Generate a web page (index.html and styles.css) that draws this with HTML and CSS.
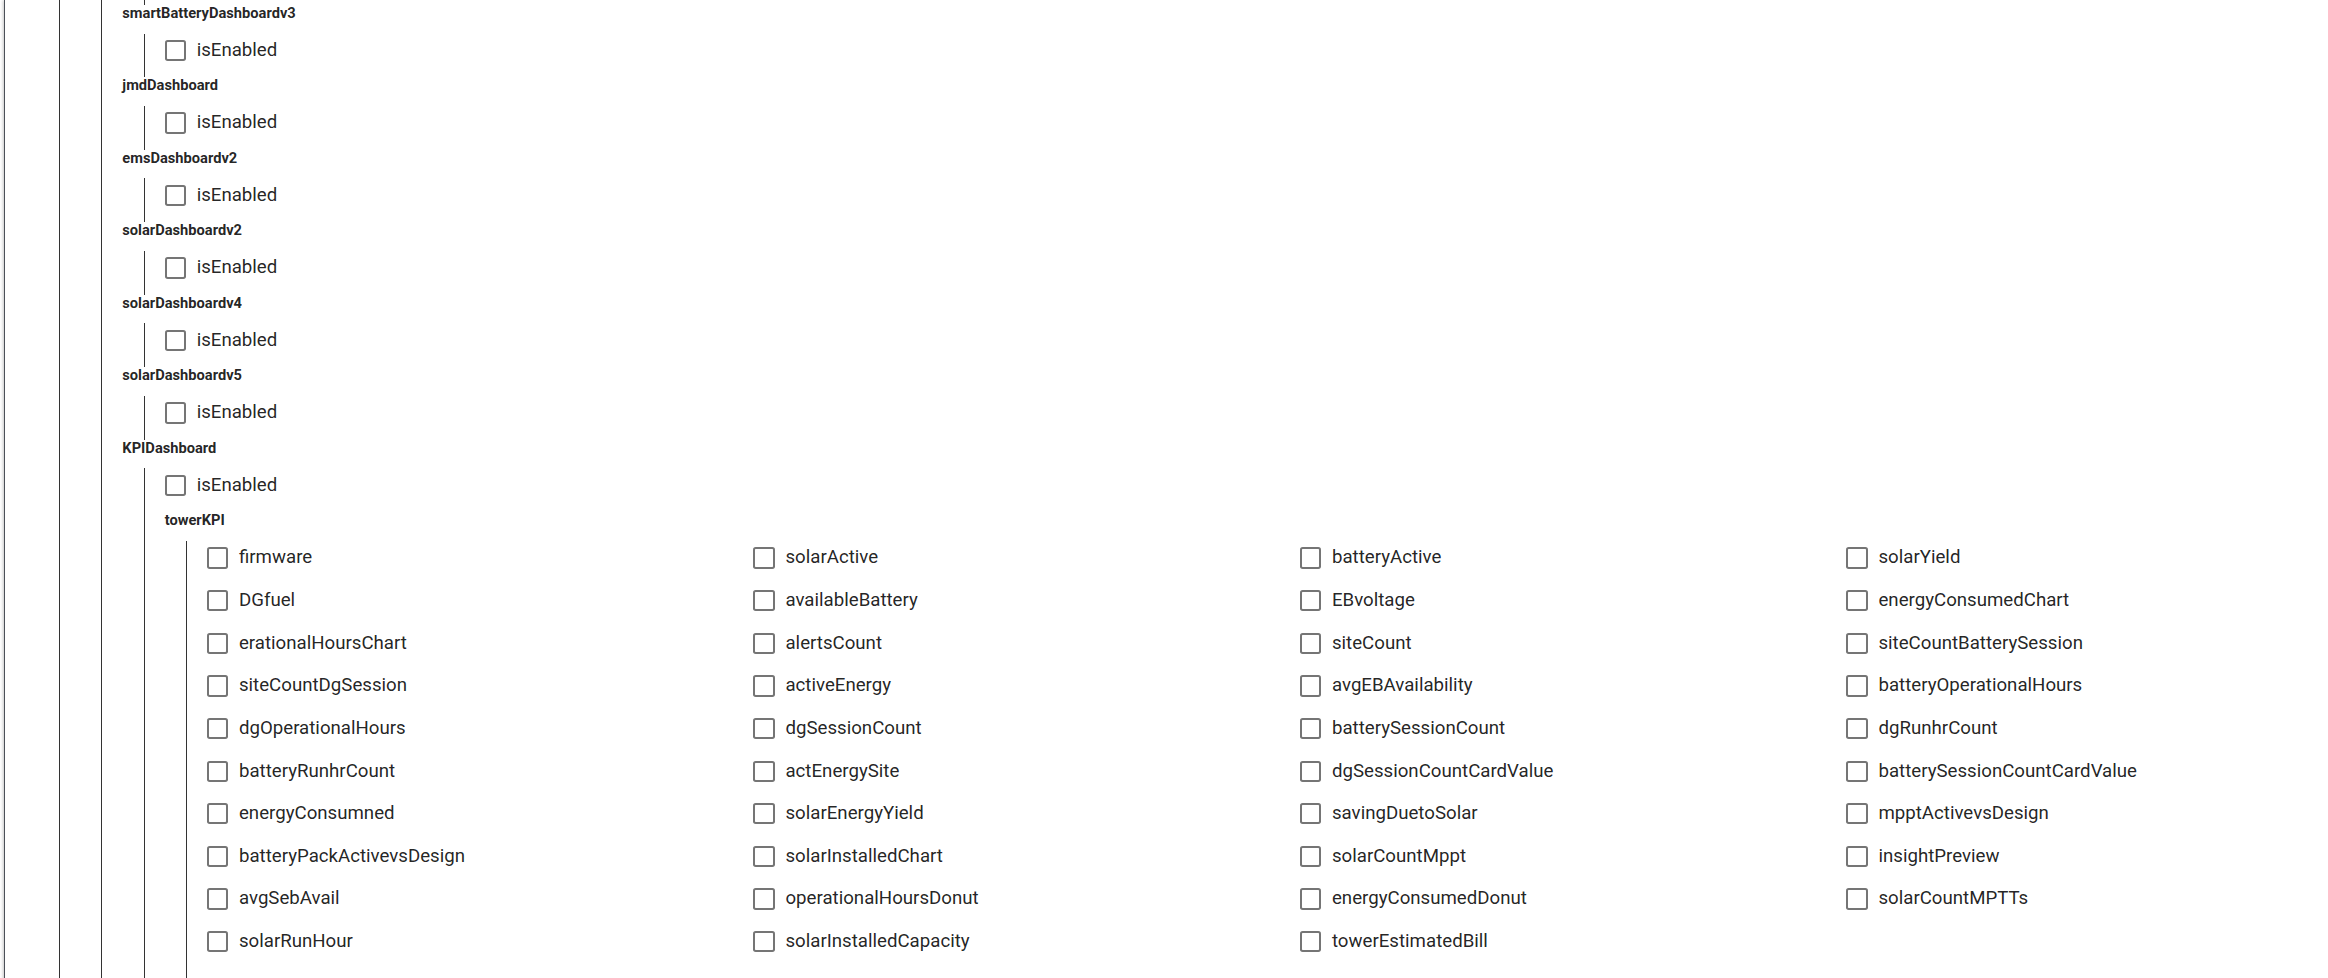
FILE: index.html
```html
<!DOCTYPE html>
<html lang="en">
<head>
<meta charset="utf-8">
<title>Dashboard permissions</title>
<link rel="stylesheet" href="styles.css">
</head>
<body>
<div class="card">
  <div class="children">
    <div class="children">
      <div class="children tail"></div>

      <section class="node">
        <div class="node-title">smartBatteryDashboardv3</div>
        <div class="children single">
          <label class="opt"><input type="checkbox" class="box"><span>isEnabled</span></label>
        </div>
      </section>

      <section class="node">
        <div class="node-title">jmdDashboard</div>
        <div class="children single">
          <label class="opt"><input type="checkbox" class="box"><span>isEnabled</span></label>
        </div>
      </section>

      <section class="node">
        <div class="node-title">emsDashboardv2</div>
        <div class="children single">
          <label class="opt"><input type="checkbox" class="box"><span>isEnabled</span></label>
        </div>
      </section>

      <section class="node">
        <div class="node-title">solarDashboardv2</div>
        <div class="children single">
          <label class="opt"><input type="checkbox" class="box"><span>isEnabled</span></label>
        </div>
      </section>

      <section class="node">
        <div class="node-title">solarDashboardv4</div>
        <div class="children single">
          <label class="opt"><input type="checkbox" class="box"><span>isEnabled</span></label>
        </div>
      </section>

      <section class="node">
        <div class="node-title">solarDashboardv5</div>
        <div class="children single">
          <label class="opt"><input type="checkbox" class="box"><span>isEnabled</span></label>
        </div>
      </section>

      <section class="node">
        <div class="node-title">KPIDashboard</div>
        <div class="children">
          <div class="single">
            <label class="opt"><input type="checkbox" class="box"><span>isEnabled</span></label>
          </div>
          <section class="node">
            <div class="node-title">towerKPI</div>
            <div class="children grid">
              <label class="opt"><input type="checkbox" class="box"><span>firmware</span></label>
              <label class="opt"><input type="checkbox" class="box"><span>solarActive</span></label>
              <label class="opt"><input type="checkbox" class="box"><span>batteryActive</span></label>
              <label class="opt"><input type="checkbox" class="box"><span>solarYield</span></label>

              <label class="opt"><input type="checkbox" class="box"><span>DGfuel</span></label>
              <label class="opt"><input type="checkbox" class="box"><span>availableBattery</span></label>
              <label class="opt"><input type="checkbox" class="box"><span>EBvoltage</span></label>
              <label class="opt"><input type="checkbox" class="box"><span>energyConsumedChart</span></label>

              <label class="opt"><input type="checkbox" class="box"><span>erationalHoursChart</span></label>
              <label class="opt"><input type="checkbox" class="box"><span>alertsCount</span></label>
              <label class="opt"><input type="checkbox" class="box"><span>siteCount</span></label>
              <label class="opt"><input type="checkbox" class="box"><span>siteCountBatterySession</span></label>

              <label class="opt"><input type="checkbox" class="box"><span>siteCountDgSession</span></label>
              <label class="opt"><input type="checkbox" class="box"><span>activeEnergy</span></label>
              <label class="opt"><input type="checkbox" class="box"><span>avgEBAvailability</span></label>
              <label class="opt"><input type="checkbox" class="box"><span>batteryOperationalHours</span></label>

              <label class="opt"><input type="checkbox" class="box"><span>dgOperationalHours</span></label>
              <label class="opt"><input type="checkbox" class="box"><span>dgSessionCount</span></label>
              <label class="opt"><input type="checkbox" class="box"><span>batterySessionCount</span></label>
              <label class="opt"><input type="checkbox" class="box"><span>dgRunhrCount</span></label>

              <label class="opt"><input type="checkbox" class="box"><span>batteryRunhrCount</span></label>
              <label class="opt"><input type="checkbox" class="box"><span>actEnergySite</span></label>
              <label class="opt"><input type="checkbox" class="box"><span>dgSessionCountCardValue</span></label>
              <label class="opt"><input type="checkbox" class="box"><span>batterySessionCountCardValue</span></label>

              <label class="opt"><input type="checkbox" class="box"><span>energyConsumned</span></label>
              <label class="opt"><input type="checkbox" class="box"><span>solarEnergyYield</span></label>
              <label class="opt"><input type="checkbox" class="box"><span>savingDuetoSolar</span></label>
              <label class="opt"><input type="checkbox" class="box"><span>mpptActivevsDesign</span></label>

              <label class="opt"><input type="checkbox" class="box"><span>batteryPackActivevsDesign</span></label>
              <label class="opt"><input type="checkbox" class="box"><span>solarInstalledChart</span></label>
              <label class="opt"><input type="checkbox" class="box"><span>solarCountMppt</span></label>
              <label class="opt"><input type="checkbox" class="box"><span>insightPreview</span></label>

              <label class="opt"><input type="checkbox" class="box"><span>avgSebAvail</span></label>
              <label class="opt"><input type="checkbox" class="box"><span>operationalHoursDonut</span></label>
              <label class="opt"><input type="checkbox" class="box"><span>energyConsumedDonut</span></label>
              <label class="opt"><input type="checkbox" class="box"><span>solarCountMPTTs</span></label>

              <label class="opt"><input type="checkbox" class="box"><span>solarRunHour</span></label>
              <label class="opt"><input type="checkbox" class="box"><span>solarInstalledCapacity</span></label>
              <label class="opt"><input type="checkbox" class="box"><span>towerEstimatedBill</span></label>
            </div>
          </section>
        </div>
      </section>
    </div>
  </div>
</div>
</body>
</html>
```
FILE: styles.css
```css
html, body {
  margin: 0;
  height: 100%;
  overflow: hidden;
  background: #ffffff;
}

body {
  font-family: Roboto, "Noto Sans", "Liberation Sans", sans-serif;
  color: rgba(0, 0, 0, 0.87);
}

.card {
  margin-left: 4px;
  border-left: 1px solid #4b5058;
  box-shadow: -1px 0 3px rgba(0, 0, 0, 0.22);
  padding-left: 32.67px;
  min-height: 100%;
}

.children {
  margin-left: 21.33px;
  border-left: 1px solid #333333;
  padding-left: 20px;
}

.tail {
  height: 5px;
}

.node-title {
  font-size: 14.67px;
  font-weight: 700;
  line-height: 16px;
  padding-bottom: 12.5px;
  white-space: nowrap;
}

.single {
  padding-bottom: 1.33px;
}

.opt {
  display: flex;
  align-items: center;
  height: 21.33px;
  padding: 6.33px 0 15px;
  cursor: pointer;
}

.box {
  appearance: none;
  -webkit-appearance: none;
  margin: 0;
  flex: none;
  width: 21.33px;
  height: 21.33px;
  box-sizing: border-box;
  border: 2.67px solid rgba(0, 0, 0, 0.54);
  border-radius: 2.67px;
  background: #ffffff;
}

.opt span {
  margin-left: 10.67px;
  font-size: 18.67px;
  line-height: 21.33px;
  white-space: nowrap;
}

.grid {
  display: grid;
  grid-template-columns: 546.5px 546.5px 546.5px 1fr;
  padding-bottom: 60px;
}
```
